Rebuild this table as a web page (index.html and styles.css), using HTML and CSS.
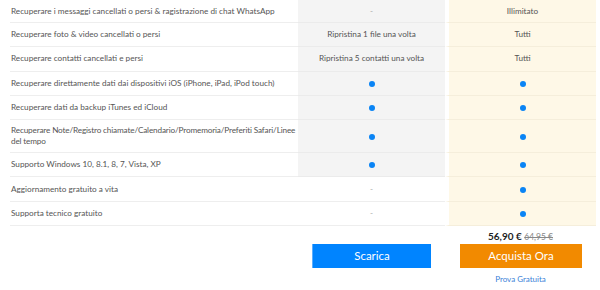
FILE: index.html
```html
<!DOCTYPE html>
<html lang="it">
<head>
  <meta charset="UTF-8" />
  <title>Confronto versioni</title>
  <meta name="viewport" content="width=device-width, initial-scale=1.0" />
  <link rel="stylesheet" href="styles.css">
</head>
<body>

  <div class="compare">
    <table class="compare-table">
      <colgroup>
        <col class="col-feature"><col class="col-free"><col class="col-pro">
      </colgroup>
      <tbody>
        <tr class="first">
          <td>Recuperare i messaggi cancellati o persi &amp; ragistrazione di chat WhatsApp</td>
          <td class="free"><span class="dash">-</span></td>
          <td class="pro">Illimitato</td>
        </tr>
        <tr>
          <td>Recuperare foto &amp; video cancellati o persi</td>
          <td class="free">Ripristina 1 file una volta</td>
          <td class="pro">Tutti</td>
        </tr>
        <tr>
          <td>Recuperare contatti cancellati e persi</td>
          <td class="free">Ripristina 5 contatti una volta</td>
          <td class="pro">Tutti</td>
        </tr>
        <tr>
          <td>Recuperare direttamente dati dai dispositivi iOS (iPhone, iPad, iPod touch)</td>
          <td class="free"><span class="dot"></span></td>
          <td class="pro"><span class="dot"></span></td>
        </tr>
        <tr>
          <td>Recuperare dati da backup iTunes ed iCloud</td>
          <td class="free"><span class="dot"></span></td>
          <td class="pro"><span class="dot"></span></td>
        </tr>
        <tr class="tall">
          <td class="nowrap">Recuperare Note/Registro chiamate/Calendario/Promemoria/Preferiti Safari/Linee<br>del tempo</td>
          <td class="free"><span class="dot"></span></td>
          <td class="pro"><span class="dot"></span></td>
        </tr>
        <tr>
          <td>Supporto Windows 10, 8.1, 8, 7, Vista, XP</td>
          <td class="free"><span class="dot"></span></td>
          <td class="pro"><span class="dot"></span></td>
        </tr>
        <tr>
          <td>Aggiornamento gratuito a vita</td>
          <td class="free plain"><span class="dash">-</span></td>
          <td class="pro"><span class="dot"></span></td>
        </tr>
        <tr>
          <td>Supporta tecnico gratuito</td>
          <td class="free plain"><span class="dash">-</span></td>
          <td class="pro"><span class="dot"></span></td>
        </tr>
        <tr class="actions">
          <td></td>
          <td class="action-cell">
            <a href="#" class="btn btn-download">Scarica</a>
          </td>
          <td class="action-cell">
            <div class="price">56,90 € <del>64,95 €</del></div>
            <a href="#" class="btn btn-buy">Acquista Ora</a>
            <a href="#" class="trial">Prova Gratuita</a>
          </td>
        </tr>
      </tbody>
    </table>
  </div>

</body>
</html>
```

FILE: styles.css
```css
html, body {
  margin: 0;
  padding: 0;
  background: #fff;
  font-family: 'Lato', 'Noto Sans', sans-serif;
  color: #555;
}

.compare {
  padding-left: 10px;
  width: 586px;
}

.compare-table {
  width: 100%;
  border-collapse: separate;
  border-spacing: 0;
  table-layout: fixed;
}

.col-feature { width: 288px; }
.col-free { width: 147px; }
.col-pro { width: 151px; }

td {
  font-size: 8.2px;
  line-height: 11px;
  height: 23.3px;
  padding: 0;
  border-bottom: 1px solid #eeeeee;
  vertical-align: middle;
  text-align: center;
}

td:first-child {
  text-align: left;
  padding: 0 8px 0 1px;
}

td.nowrap {
  white-space: nowrap;
  letter-spacing: -0.15px;
}

tr.first td {
  height: 22px;
}

tr.tall td {
  height: 32px;
}

/* lite column */
.free {
  background: #f4f4f4;
  border-bottom-color: #ebebeb;
}

.free.plain {
  background: #fff;
  border-bottom-color: #eeeeee;
}

/* full version column, white strip separates it */
.pro {
  background: #fef8e7;
  border-left: 4px solid #fff;
  border-bottom-color: #f5eedb;
}

.dash {
  color: #aaa;
}

.dot {
  display: inline-block;
  width: 6px;
  height: 6px;
  border-radius: 50%;
  background: #0a84f5;
  vertical-align: middle;
}

tr.actions td {
  height: 63px;
  background: #fff;
  vertical-align: top;
  border-bottom-color: #eeeeee;
}

.action-cell {
  padding-top: 4px;
}

.price {
  font-size: 10px;
  line-height: 12px;
  height: 14px;
  color: #222;
  font-weight: 700;
}

.price del {
  font-size: 8.5px;
  font-weight: 400;
  color: #888;
}

.btn {
  display: block;
  height: 24px;
  line-height: 24px;
  margin: 0 14px 0 14px;
  color: #fff;
  font-size: 11.5px;
  text-decoration: none;
}

.btn-download {
  background: #0084ff;
  margin-top: 14px;
  border-left: 1px solid #5aaeff;
}

.btn-buy {
  background: #f28a00;
  margin: 0 14px 0 15px;
}

.trial {
  display: block;
  margin-top: 6px;
  font-size: 8px;
  color: #3a7fd8;
  text-decoration: none;
}
```
